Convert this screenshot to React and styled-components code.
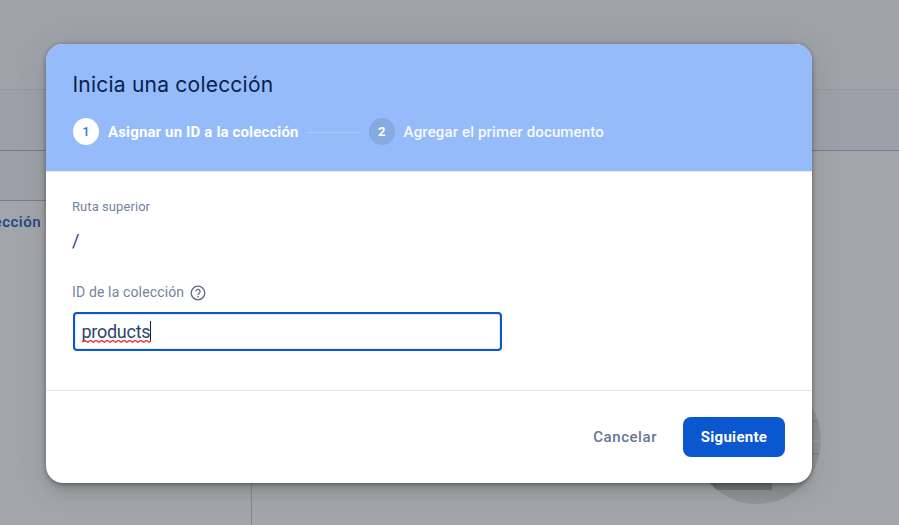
import React from "react";
import styled, { createGlobalStyle } from "styled-components";

const GlobalStyle = createGlobalStyle`
  * { box-sizing: border-box; }
  body { margin: 0; overflow: hidden; font-family: Roboto, sans-serif; }
`;

const Screen = styled.div`
  position: relative;
  width: 899px;
  height: 525px;
  overflow: hidden;
  display: flex;
  flex-direction: column;
  background: #a2a5a9;
`;

const TopBar = styled.header`
  flex: none;
  height: 90px;
  background: #9fa2a9;
  border-bottom: 1px solid #92969e;
`;

const TabBar = styled.nav`
  flex: none;
  height: 61px;
  background: #9ca0a8;
  border-bottom: 1px solid #6f7c91;
`;

const Panels = styled.main`
  flex: 1;
  display: flex;
`;

const SidePanel = styled.aside`
  width: 252px;
  border-right: 1px solid #85888e;
`;

const PanelHeading = styled.div`
  height: 50px;
  background: #9ca0a8;
  border-bottom: 1px solid #6f7c91;
`;

const PanelLink = styled.div`
  width: 41px;
  height: 41px;
  display: flex;
  align-items: center;
  justify-content: flex-end;
  white-space: nowrap;
  font-size: 15px;
  font-weight: 500;
  letter-spacing: 0.5px;
  color: #1c4488;
`;

const EmptyPanel = styled.section`
  flex: 1;
  padding: 225px 0 0 441px;
`;

const EmptyArt = styled.svg`
  display: block;
  width: 128px;
  height: 128px;
`;

const Dialog = styled.div`
  position: absolute;
  top: 44px;
  left: 46px;
  width: 766px;
  height: 439px;
  display: flex;
  flex-direction: column;
  overflow: hidden;
  border-radius: 17px;
  background: #fff;
  box-shadow: 0 12px 16px -8px rgba(0, 0, 0, 0.2),
    0 4px 30px 2px rgba(70, 75, 60, 0.12), 0 1px 5px rgba(0, 0, 0, 0.38);
`;

const DialogHeader = styled.div`
  flex: none;
  height: 128px;
  padding: 25px 27px 0;
  background: #96bbfa;
  border-bottom: 1px solid #dfe8f6;
`;

const Title = styled.h2`
  margin: 0 0 0 -0.5px;
  font: 400 21px/32px Inter, sans-serif;
  letter-spacing: 0.22px;
  color: #08214f;
`;

const Stepper = styled.div`
  display: flex;
  align-items: center;
  margin-top: 17px;
`;

const StepBadge = styled.span`
  width: 26px;
  height: 27px;
  border-radius: 50%;
  display: flex;
  align-items: center;
  justify-content: center;
  font-size: 13px;
  font-weight: ${(p) => (p.$active ? 500 : 700)};
  color: ${(p) => (p.$active ? "#1a7af0" : "#fff")};
  background: ${(p) => (p.$active ? "#fff" : "#87a9e1")};
`;

const StepLabel = styled.span`
  margin-left: 9px;
  font-size: 15px;
  line-height: 20px;
  white-space: nowrap;
  font-weight: ${(p) => (p.$active ? 700 : 500)};
  letter-spacing: 0.14px;
  color: ${(p) => (p.$active ? "#fff" : "#f7faff")};
`;

const StepLine = styled.span`
  width: 53px;
  height: 1px;
  margin: 1px 9px 0 8px;
  background: #b3cdfb;
`;

const DialogBody = styled.div`
  flex: 1;
  padding: 26px 26px 0;
`;

const PathLabel = styled.div`
  font-size: 13px;
  line-height: 18px;
  letter-spacing: 0.07px;
  color: #74839d;
`;

const PathValue = styled.div`
  margin-top: 13px;
  font-size: 18px;
  line-height: 24px;
  color: #2c456e;
`;

const FieldLabel = styled.div`
  display: flex;
  align-items: center;
  gap: 6px;
  height: 20px;
  margin-top: 29px;
  font-size: 14px;
  letter-spacing: 0.14px;
  color: #74839d;
`;

const HelpIcon = styled.svg`
  width: 16px;
  height: 16px;
  margin-top: 2px;
`;

const TextField = styled.div`
  display: flex;
  align-items: center;
  width: 429px;
  height: 39px;
  margin-top: 10px;
  margin-left: 1px;
  padding: 0 6.5px;
  border: 2px solid #0b57d0;
  border-radius: 4px;
  box-shadow: inset 0 0 0 1px #e3ecfc;
  font-size: 18px;
  letter-spacing: -0.27px;
  line-height: 22px;
  color: #2c456e;
`;

const Misspelled = styled.span`
  position: relative;
`;

const Squiggle = styled.svg`
  position: absolute;
  left: 0;
  bottom: 0;
  width: 69px;
  height: 3px;
`;

const Caret = styled.span`
  width: 1px;
  height: 21px;
  background: #08214f;
`;

const DialogFooter = styled.div`
  flex: none;
  height: 93px;
  padding-right: 27px;
  display: flex;
  align-items: center;
  justify-content: flex-end;
  gap: 9px;
  border-top: 1px solid #e1e5ec;
`;

const Button = styled.button`
  height: 40px;
  padding: 0 ${(p) => (p.$primary ? 0 : 17)}px;
  width: ${(p) => (p.$primary ? "102px" : "auto")};
  border: 0;
  border-radius: 8px;
  font: ${(p) => (p.$primary ? 700 : 500)} 15px/20px Roboto, sans-serif;
  letter-spacing: ${(p) => (p.$primary ? 0.3 : 0.55)}px;
  color: ${(p) => (p.$primary ? "#fff" : "#667795")};
  background: ${(p) => (p.$primary ? "#0b57d0" : "transparent")};
`;

export default function App() {
  return (
    <>
      <GlobalStyle />
      <Screen>
        <TopBar />
        <TabBar />
        <Panels>
          <SidePanel>
            <PanelHeading />
            <PanelLink>ección</PanelLink>
          </SidePanel>
          <EmptyPanel>
            <EmptyArt viewBox="0 0 128 128">
              <clipPath id="disc">
                <circle cx="64" cy="64" r="64" />
              </clipPath>
              <g clipPath="url(#disc)">
                <path d="M0 0h128v128H0z" fill="#919497" />
                <path d="M0 95h79v19H0z" fill="#747779" />
                <path d="M100 45h24M100 78h26" stroke="#85888b" strokeWidth="2" />
                <path d="M100 65h28" stroke="#9b9ea1" strokeWidth="2" />
              </g>
            </EmptyArt>
          </EmptyPanel>
        </Panels>

        <Dialog role="dialog">
          <DialogHeader>
            <Title>Inicia una colección</Title>
            <Stepper>
              <StepBadge $active>1</StepBadge>
              <StepLabel $active>Asignar un ID a la colección</StepLabel>
              <StepLine />
              <StepBadge>2</StepBadge>
              <StepLabel>Agregar el primer documento</StepLabel>
            </Stepper>
          </DialogHeader>
          <DialogBody>
            <PathLabel>Ruta superior</PathLabel>
            <PathValue>/</PathValue>
            <FieldLabel>
              ID de la colección
              <HelpIcon viewBox="0 0 16 16" fill="none" stroke="#566987">
                <circle cx="8" cy="8" r="6.8" strokeWidth="1.3" />
                <path d="M5.9 6.6a2.1 2.1 0 1 1 3.4 1.6C8.5 8.8 8 9.1 8 10" strokeWidth="1.2" />
                <path d="M8 11v1.5" strokeWidth="1.3" />
              </HelpIcon>
            </FieldLabel>
            <TextField>
              <Misspelled>
                products
                <Squiggle viewBox="0 0 69 3" fill="none" stroke="#f03030" strokeWidth="1.3">
                  <path d="M0 2.3l2.2-1.6h1.2l2.2 1.6 2.2-1.6H9l2.2 1.6 2.2-1.6h1.2l2.2 1.6L19 .7h1.2l2.2 1.6L24.6.7h1.2L28 2.3 30.2.7h1.2l2.2 1.6L35.8.7H37l2.2 1.6L41.4.7h1.2l2.2 1.6L47 .7h1.2l2.2 1.6L52.6.7h1.2L56 2.3 58.2.7h1.2l2.2 1.6L63.8.7H65l2.2 1.6L69 .9" />
                </Squiggle>
              </Misspelled>
              <Caret />
            </TextField>
          </DialogBody>
          <DialogFooter>
            <Button>Cancelar</Button>
            <Button $primary>Siguiente</Button>
          </DialogFooter>
        </Dialog>
      </Screen>
    </>
  );
}
